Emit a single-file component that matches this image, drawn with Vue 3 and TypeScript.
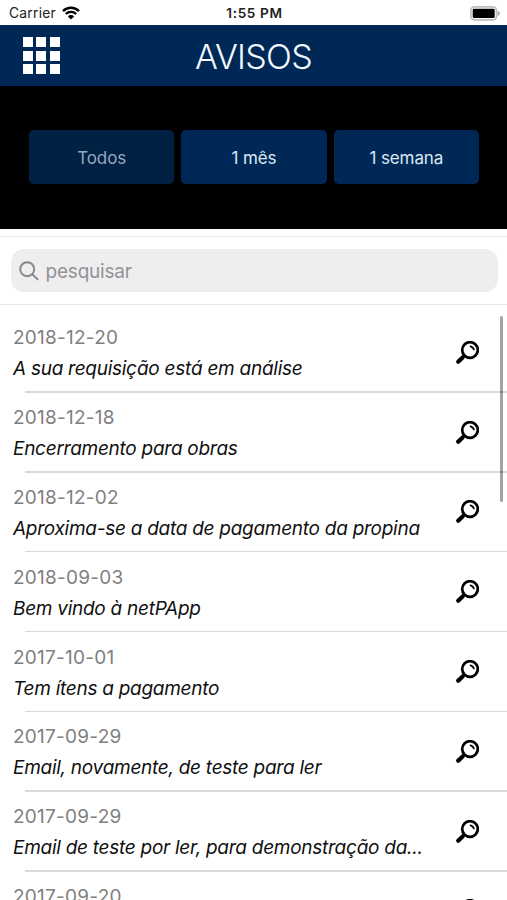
<script setup lang="ts">
import { ref } from 'vue'

interface Notice {
  date: string
  title: string
}

const filters: string[] = ['Todos', '1 mês', '1 semana']
const active = ref(0)
const search = ref('')

const notices: Notice[] = [
  { date: '2018-12-20', title: 'A sua requisição está em análise' },
  { date: '2018-12-18', title: 'Encerramento para obras' },
  { date: '2018-12-02', title: 'Aproxima-se a data de pagamento da propina' },
  { date: '2018-09-03', title: 'Bem vindo à netPApp' },
  { date: '2017-10-01', title: 'Tem ítens a pagamento' },
  { date: '2017-09-29', title: 'Email, novamente, de teste para ler' },
  { date: '2017-09-29', title: 'Email de teste por ler, para demonstração da...' },
  { date: '2017-09-20', title: '' },
]
</script>

<template>
  <div class="screen">
    <div class="status">
      <div class="carrier">
        <span>Carrier</span>
        <svg class="wifi" viewBox="0 0 18 14" width="18" height="14">
          <path d="M1 5.1a11.4 11.4 0 0 1 16 0" />
          <path d="M3.8 8a7.4 7.4 0 0 1 10.4 0" />
          <path class="dot" d="M9 13.6 5.9 10.4a4.4 4.4 0 0 1 6.2 0z" />
        </svg>
      </div>
      <span class="clock">1:55 PM</span>
      <div class="power">
        <svg viewBox="0 0 31 15" width="31" height="15">
          <rect x="1.9" y="0.9" width="25.6" height="13" rx="3.6" fill="#fff" stroke="#bdbdbd" stroke-width="1.7" />
          <rect x="3.7" y="2.7" width="22" height="9.4" rx="1.4" fill="#000" />
          <path d="M28.7 4.7q2.2 1 2.2 2.7t-2.2 2.7z" fill="#a8a8a8" />
        </svg>
      </div>
    </div>

    <header class="bar">
      <button class="menu" aria-label="Menu">
        <i v-for="n in 9" :key="n"></i>
      </button>
      <h1>AVISOS</h1>
    </header>

    <nav class="filters">
      <button
        v-for="(label, i) in filters"
        :key="label"
        :class="{ active: active === i }"
        @click="active = i"
      >
        {{ label }}
      </button>
    </nav>

    <div class="gap"></div>

    <div class="search">
      <label class="field">
        <svg viewBox="0 0 20 20" width="20" height="20">
          <circle cx="8.2" cy="8.2" r="7" />
          <path d="M13.2 13.2 18.6 18.4" />
        </svg>
        <input v-model="search" type="text" placeholder="pesquisar" />
      </label>
    </div>

    <main class="list">
      <article v-for="(notice, i) in notices" :key="i" class="row">
        <div class="text">
          <time>{{ notice.date }}</time>
          <p>{{ notice.title }}</p>
        </div>
        <svg class="lens" viewBox="0 0 24 24" width="24" height="24">
          <circle cx="15" cy="9" r="7.8" />
          <path class="glint" d="M15.6 5.3q2.3.7 3.3 3" />
          <path class="neck" d="M9.3 14.7 7 17" />
          <path class="handle" d="M7.6 16.4 3.2 20.8" />
        </svg>
      </article>
      <div class="scrollbar"></div>
    </main>
  </div>
</template>

<style>
body {
  margin: 0;
  background: #fff;
}
</style>

<style scoped>
.screen {
  display: flex;
  flex-direction: column;
  width: 507px;
  height: 900px;
  overflow: hidden;
  background: #fff;
  font-family: Inter, 'Liberation Sans', sans-serif;
}

button {
  border: 0;
  padding: 0;
  font-family: inherit;
}

.status {
  flex: none;
  display: grid;
  grid-template-columns: 1fr auto 1fr;
  align-items: center;
  height: 25px;
  padding: 1px 7px 0 9px;
  box-sizing: border-box;
  font-size: 13.8px;
  color: #222;
}

.carrier {
  display: flex;
  align-items: center;
  gap: 6px;
  letter-spacing: 0.25px;
}

.wifi {
  fill: none;
  stroke: #000;
  stroke-width: 2.4;
}

.wifi .dot {
  fill: #000;
  stroke: none;
}

.clock {
  font-weight: 600;
  font-size: 13.6px;
  letter-spacing: 0.65px;
}

.power {
  display: flex;
  justify-content: flex-end;
}

.bar {
  flex: none;
  display: grid;
  grid-template-columns: 1fr auto 1fr;
  align-items: center;
  height: 61px;
  padding: 0 23px;
  background: #002856;
}

.menu {
  display: grid;
  grid-template-columns: repeat(3, 10px);
  grid-auto-rows: 10px;
  gap: 3.3px;
  width: 37px;
  background: none;
}

.menu i {
  background: #fff;
}

h1 {
  margin: 0;
  padding-top: 1px;
  font-size: 34px;
  font-weight: 300;
  letter-spacing: -0.7px;
  color: #f4f9ff;
}

.filters {
  flex: none;
  display: grid;
  grid-template-columns: repeat(3, 1fr);
  gap: 7px;
  height: 143px;
  padding: 44px 28px 45px 29px;
  box-sizing: border-box;
  background: #000;
}

.filters button {
  padding-top: 1px;
  border-radius: 5px;
  background: #002856;
  color: #dce8f7;
  font-size: 17px;
  letter-spacing: -0.1px;
}

.filters button.active {
  background: #002044;
  color: #97a8bd;
}

.gap {
  flex: none;
  height: 7px;
  background: #fdfdfd;
  border-bottom: 1px solid #e9e9e9;
}

.search {
  flex: none;
  height: 68px;
  padding: 12px 9px 12px 11px;
  box-sizing: border-box;
  border-bottom: 1px solid #e6e6e6;
}

.field {
  display: flex;
  align-items: center;
  gap: 6.5px;
  height: 43px;
  padding: 0 9px 0 8px;
  border-radius: 13px;
  background: #eeeeee;
}

.field svg {
  flex: none;
  fill: none;
  stroke: #85858a;
  stroke-width: 1.9;
  stroke-linecap: round;
}

.field input {
  flex: 1;
  min-width: 0;
  padding: 1px 0 0;
  border: 0;
  outline: 0;
  background: none;
  font: 19px Inter, sans-serif;
  letter-spacing: -0.2px;
}

.field input::placeholder {
  color: #929297;
  opacity: 1;
}

.list {
  position: relative;
  flex: 1;
  min-height: 0;
  padding-top: 8px;
}

.row {
  position: relative;
  display: flex;
  align-items: center;
  justify-content: space-between;
  height: 79.8px;
  padding: 0 28.5px 0 13px;
}

.row::after {
  content: '';
  position: absolute;
  left: 25px;
  right: 0;
  bottom: 0;
  height: 1.4px;
  background: #d9d9d9;
}

.text {
  display: grid;
  grid-auto-rows: 31px;
  align-items: center;
  padding-top: 1px;
}

time {
  font-size: 19px;
  letter-spacing: 0.25px;
  color: #808080;
}

p {
  margin: 0;
  font-size: 19px;
  font-style: italic;
  letter-spacing: -0.27px;
  white-space: nowrap;
  color: #101010;
}

.lens {
  flex: none;
  fill: none;
  stroke: #000;
  stroke-width: 2.7;
  stroke-linecap: round;
}

.lens .glint {
  stroke-width: 1.8;
}

.lens .handle {
  stroke-width: 4.2;
}

.scrollbar {
  position: absolute;
  top: 11px;
  right: 4px;
  width: 3.4px;
  height: 186px;
  border-radius: 2px;
  background: rgba(0, 0, 0, 0.36);
}
</style>
